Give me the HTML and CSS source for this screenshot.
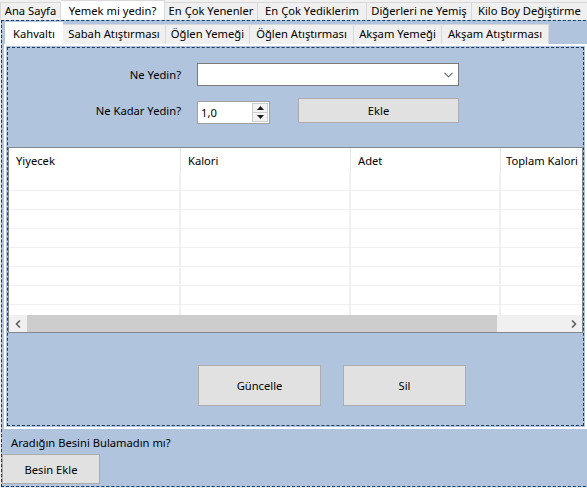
FILE: index.html
```html
<!DOCTYPE html>
<html lang="tr">
<head>
<meta charset="utf-8">
<title>Yemek mi yedin?</title>
<link rel="stylesheet" href="styles.css">
</head>
<body>
<div class="app">
  <div class="tabs outer-tabs">
    <div class="tab o1">Ana Sayfa</div>
    <div class="tab o2 sel">Yemek mi yedin?</div>
    <div class="tab o3">En Çok Yenenler</div>
    <div class="tab o4">En Çok Yediklerim</div>
    <div class="tab o5">Diğerleri ne Yemiş</div>
    <div class="tab o6">Kilo Boy Değiştirme</div>
  </div>
  <div class="outer-page">
    <div class="tabctl">
      <div class="tabs inner-tabs">
        <div class="itab i1 sel">Kahvaltı</div>
        <div class="itab i2">Sabah Atıştırması</div>
        <div class="itab i3">Öğlen Yemeği</div>
        <div class="itab i4">Öğlen Atıştırması</div>
        <div class="itab i5">Akşam Yemeği</div>
        <div class="itab i6">Akşam Atıştırması</div>
      </div>
      <div class="inner-page">
        <div class="content">
          <div class="row r1">
            <label class="lbl">Ne Yedin?</label>
            <div class="combo">
              <svg class="chev" width="9" height="6" viewBox="0 0 9 6"><path d="M0.5 0.8 L4.5 4.8 L8.5 0.8" fill="none" stroke="#606060" stroke-width="1.1"/></svg>
            </div>
          </div>
          <div class="row r2">
            <label class="lbl">Ne Kadar Yedin?</label>
            <div class="num">
              <span class="num-val">1,0</span>
              <div class="spin">
                <div class="spin-btn"><svg width="7" height="4" viewBox="0 0 7 4"><path d="M0 4 L3.5 0 L7 4 Z" fill="#1a1a1a"/></svg></div>
                <div class="spin-btn"><svg width="7" height="4" viewBox="0 0 7 4"><path d="M0 0 L3.5 4 L7 0 Z" fill="#1a1a1a"/></svg></div>
              </div>
            </div>
            <button class="btn ekle">Ekle</button>
          </div>
          <div class="list">
            <div class="lhead">
              <div class="hcell c1">Yiyecek</div>
              <div class="hcell c2">Kalori</div>
              <div class="hcell c3">Adet</div>
              <div class="hcell c4">Toplam Kalori</div>
            </div>
            <div class="lbody">
              <div class="lrow"><div class="cell c1"></div><div class="cell c2"></div><div class="cell c3"></div><div class="cell c4"></div></div>
              <div class="lrow"><div class="cell c1"></div><div class="cell c2"></div><div class="cell c3"></div><div class="cell c4"></div></div>
              <div class="lrow"><div class="cell c1"></div><div class="cell c2"></div><div class="cell c3"></div><div class="cell c4"></div></div>
              <div class="lrow"><div class="cell c1"></div><div class="cell c2"></div><div class="cell c3"></div><div class="cell c4"></div></div>
              <div class="lrow"><div class="cell c1"></div><div class="cell c2"></div><div class="cell c3"></div><div class="cell c4"></div></div>
              <div class="lrow"><div class="cell c1"></div><div class="cell c2"></div><div class="cell c3"></div><div class="cell c4"></div></div>
              <div class="lrow"><div class="cell c1"></div><div class="cell c2"></div><div class="cell c3"></div><div class="cell c4"></div></div>
              <div class="lrow"><div class="cell c1"></div><div class="cell c2"></div><div class="cell c3"></div><div class="cell c4"></div></div>
            </div>
            <div class="hscroll">
              <div class="sarrow"><svg width="6" height="8" viewBox="0 0 6 8"><path d="M5 0.5 L1.5 4 L5 7.5" fill="none" stroke="#606060" stroke-width="1.6"/></svg></div>
              <div class="track"><div class="thumb"></div></div>
              <div class="sarrow"><svg width="6" height="8" viewBox="0 0 6 8"><path d="M1 0.5 L4.5 4 L1 7.5" fill="none" stroke="#606060" stroke-width="1.6"/></svg></div>
            </div>
          </div>
          <div class="actions">
            <button class="btn big guncelle">Güncelle</button>
            <button class="btn big sil">Sil</button>
          </div>
        </div>
      </div>
    </div>
    <div class="hint">Aradığın Besini Bulamadın mı?</div>
    <button class="btn besin">Besin Ekle</button>
  </div>
</div>
</body>
</html>
```

FILE: styles.css
```css
* { box-sizing: border-box; }
html, body { margin: 0; padding: 0; }
body {
  font-family: "Noto Sans", "Open Sans", sans-serif;
  font-size: 11.2px;
  color: #000;
  background: #f0f0f0;
}
.app {
  width: 587px;
  height: 488px;
  overflow: hidden;
  background: #f0f0f0;
}

/* outer tab strip */
.outer-tabs {
  display: flex;
  align-items: flex-end;
  height: 20px;
}
.tab {
  height: 18px;
  line-height: 16px;
  background: #f0f0f0;
  border: 1px solid #d9d9d9;
  border-bottom: none;
  border-left: none;
  text-align: center;
  white-space: nowrap;
  flex: none;
}
.tab.sel {
  height: 20px;
  line-height: 19px;
  background: #fff;
  border-color: #d9d9d9;
}
.o1 { width: 61px; border-left: 1px solid #d9d9d9; }
.o2 { width: 104px; }
.o3 { width: 93px; }
.o4 { width: 109px; }
.o5 { width: 105px; }
.o6 { width: 118px; text-align: left; padding-left: 6px; }

/* outer page */
.outer-page {
  width: 620px;
  height: 467px;
  margin-left: 1px;
  background: #b0c4de;
  border: 1px dashed #1f3a5f;
  border-right: none;
}

/* inner tab control */
.tabctl {
  margin-left: 2px;
  margin-top: 1px;
  width: 583px;
}
.inner-tabs {
  display: flex;
  align-items: flex-end;
  height: 22px;
  padding-left: 1px;
}
.itab {
  height: 20px;
  line-height: 18px;
  background: #f0f0f0;
  border: 1px solid #d9d9d9;
  border-bottom: none;
  border-left: none;
  text-align: center;
  white-space: nowrap;
  flex: none;
}
.itab.sel {
  height: 22px;
  line-height: 21px;
  background: #fff;
  border: 1px solid #fff;
  border-bottom: none;
}
.i1 { width: 58px; }
.i2 { width: 103px; }
.i3 { width: 84px; }
.i4 { width: 104px; }
.i5 { width: 88px; }
.i6 { width: 107px; }

.inner-page {
  height: 385px;
  border: 2px solid #fff;
  padding: 1px;
  background: #b0c4de;
}
.content {
  height: 100%;
  border: 1px dashed #1f3a5f;
  background: #b0c4de;
}

/* form rows */
.row {
  display: flex;
  align-items: flex-start;
}
.r1 { margin-top: 15px; height: 23px; align-items: center; }
.r2 { margin-top: 12px; height: 26px; }
.lbl {
  width: 173px;
  text-align: right;
  margin-right: 16px;
  flex: none;
}
.r2 .lbl { margin-top: 5px; }
.combo {
  width: 262px;
  height: 23px;
  background: #fff;
  border: 1px solid #7a7a7a;
  display: flex;
  align-items: center;
  justify-content: flex-end;
  padding-right: 5px;
}
.num {
  margin-top: 3px;
  width: 73px;
  height: 23px;
  background: #fff;
  border: 1px solid #a0a0a0;
  display: flex;
  align-items: center;
  padding-left: 3px;
  padding-right: 1px;
}
.num-val { flex: 1; }
.spin {
  width: 16px;
  height: 21px;
  display: flex;
  flex-direction: column;
  padding: 1px 0;
}
.spin-btn {
  flex: 1;
  display: flex;
  align-items: center;
  justify-content: center;
  background: #f3f3f3;
  border: 1px solid #cfcfcf;
}
.spin-btn + .spin-btn { border-top: none; }

.btn {
  font: inherit;
  color: #000;
  background: #e1e1e1;
  border: 1px solid #adadad;
  padding: 0;
  margin: 0;
}
.ekle {
  margin-left: 28px;
  width: 161px;
  height: 25px;
}

/* list view */
.list {
  margin-top: 23px;
  width: 575px;
  height: 186px;
  border: 1px solid #828790;
  background: #fff;
  overflow: hidden;
}
.lhead {
  display: flex;
  height: 24px;
}
.hcell {
  height: 24px;
  line-height: 25px;
  padding-left: 7px;
  border-right: 1px solid #e5e5e5;
  flex: none;
  white-space: nowrap;
}
.c1 { width: 172px; }
.c2 { width: 170px; }
.c3 { width: 150px; }
.c4 { width: 100px; }
.lhead .c4 { padding-left: 5px; }
.lbody {
  height: 143px;
  overflow: hidden;
}
.lrow {
  display: flex;
  height: 19px;
  border-bottom: 1px solid #f0f0f0;
}
.cell {
  flex: none;
  height: 18px;
  border-right: 2px solid #f0f0f0;
}
.hscroll {
  display: flex;
  height: 17px;
  background: #f0f0f0;
}
.sarrow {
  width: 17px;
  height: 17px;
  display: flex;
  align-items: center;
  justify-content: center;
  flex: none;
}
.track {
  flex: 1;
  padding-left: 1px;
}
.thumb {
  width: 470px;
  height: 17px;
  background: #cdcdcd;
}

/* action buttons */
.actions {
  display: flex;
  margin-top: 32px;
}
.big {
  width: 123px;
  height: 41px;
}
.guncelle { margin-left: 190px; }
.sil { margin-left: 22px; }

/* bottom */
.hint {
  margin-top: 6px;
  margin-left: 9px;
  height: 16px;
  line-height: 16px;
}
.besin {
  display: block;
  margin-top: 3px;
  margin-left: 0;
  width: 98px;
  height: 30px;
}
```
